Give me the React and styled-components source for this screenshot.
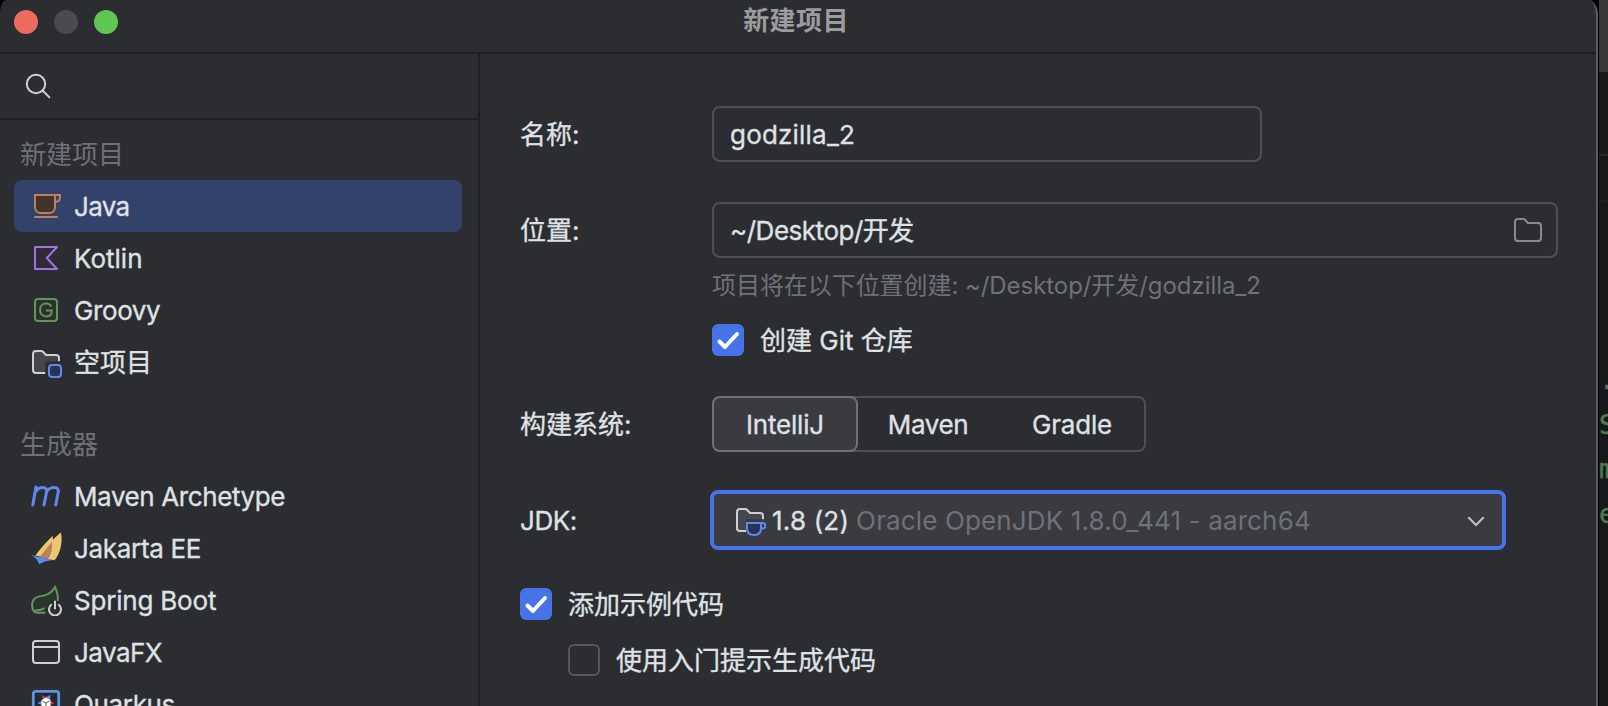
import React from 'react';
import styled, { createGlobalStyle } from 'styled-components';

const Global = createGlobalStyle`
  * { box-sizing: border-box; }
  body { margin: 0; background: #161719; overflow: hidden; }
`;

const Screen = styled.div`
  display: flex;
  width: 1608px;
  height: 706px;
  overflow: hidden;
  background: #000;
  font-family: Inter, "Noto Sans CJK SC", sans-serif;
  font-size: 26px;
  font-weight: 400;
  line-height: 31px;
  color: #dfe1e5;
  white-space: nowrap;
`;

const Window = styled.div`
  display: flex;
  flex-direction: column;
  flex: none;
  width: 1598px;
  height: 726px;
  background: #2b2d30;
  border-right: 2px solid #5a5c5f;
  border-top-left-radius: 7px 12px;
  border-top-right-radius: 10px 15px;
`;

const TitleBar = styled.header`
  display: grid;
  grid-template-columns: 1fr auto 1fr;
  flex: none;
  height: 54px;
  padding: 0 18px 0 14px;
  align-items: start;
  border-bottom: 2px solid #1e1f22;
`;

const Lights = styled.div`
  display: flex;
  gap: 16px;
  padding-top: 10px;
`;

const Light = styled.span`
  width: 24px;
  height: 24px;
  border-radius: 50%;
  background: ${(p) => p.$color};
`;

const Title = styled.h1`
  margin: 0;
  padding-top: 5px;
  font-size: 26px;
  font-weight: 700;
  letter-spacing: 0.4px;
  color: #9b9c9e;
`;

const Body = styled.div`
  display: flex;
  flex: 1;
  min-height: 0;
`;

const Sidebar = styled.aside`
  width: 480px;
  flex: none;
  border-right: 2px solid #1e1f22;
  overflow: hidden;
`;

const SearchBar = styled.div`
  display: flex;
  height: 66px;
  padding-left: 22px;
  align-items: center;
  border-bottom: 2px solid #1e1f22;
`;

const Group = styled.section`
  padding: ${(p) => (p.$first ? '8px' : '30px')} 16px 0 14px;
`;

const GroupTitle = styled.h2`
  margin: 0;
  padding: 11px 0 10px 6px;
  font-size: 26px;
  font-weight: 400;
  color: #6f7177;
`;

const Item = styled.div`
  display: flex;
  align-items: center;
  gap: 12px;
  height: 52px;
  padding-left: 16px;
  border-radius: 8px;
  background: ${(p) => (p.$selected ? '#33426a' : 'transparent')};
`;

const Text = styled.span`
  padding-top: 1px;
  letter-spacing: ${(p) => p.$track || 0}px;
  -webkit-text-stroke: 0.35px currentColor;
`;

const Icon = styled.svg`
  flex: none;
  display: block;
  width: 32px;
  height: 32px;
  fill: none;
`;

const Form = styled.main`
  display: flex;
  flex-direction: column;
  flex: 1;
  padding: 52px 38px 0 40px;
`;

const Row = styled.div`
  display: flex;
  align-items: center;
  height: 56px;
  margin-bottom: ${(p) => p.$gap || 0}px;
`;

const Label = styled(Text).attrs({ as: 'label' })`
  width: 192px;
  flex: none;
`;

const Field = styled.div`
  display: flex;
  align-items: center;
  justify-content: space-between;
  width: ${(p) => p.$width}px;
  height: 56px;
  padding: 0 12px 0 16px;
  border: 2px solid #4e5054;
  border-radius: 8px;
`;

const Hint = styled.p`
  margin: 13px 0 24px 192px;
  font-size: 24px;
  line-height: 29px;
  letter-spacing: -0.06px;
  color: #6f7177;
`;

const CheckRow = styled.div`
  display: flex;
  align-items: center;
  gap: 16px;
  height: 32px;
  margin: 0 0 ${(p) => p.$gap || 0}px ${(p) => p.$indent || 0}px;
`;

const Box = styled.span`
  display: flex;
  width: 32px;
  height: 32px;
  border-radius: 6px;
  border: ${(p) => (p.$checked ? 'none' : '2px solid #55575b')};
  background: ${(p) => (p.$checked ? '#4673e8' : 'transparent')};
`;

const Segments = styled.div`
  display: flex;
  width: 434px;
  height: 56px;
  border-radius: 8px;
  box-shadow: inset 0 0 0 2px #4e5054;
`;

const Segment = styled.span`
  display: flex;
  align-items: center;
  justify-content: center;
  width: ${(p) => p.$width}px;
  border-radius: 8px;
  border: 2px solid ${(p) => (p.$selected ? '#6f7178' : 'transparent')};
  background: ${(p) => (p.$selected ? '#3a3b40' : 'transparent')};
`;

const Combo = styled.div`
  display: flex;
  align-items: center;
  flex: none;
  width: 796px;
  height: 60px;
  margin-left: -2px;
  padding: 0 10px 0 20px;
  border: 4px solid #4673e8;
  border-radius: 8px;
  background: #3a3b40;
`;

const ComboValue = styled(Text)`
  margin: 0 7px 0 6px;
`;

const ComboDetail = styled(Text)`
  flex: 1;
  color: #6f7177;
  -webkit-text-stroke: 0;
`;

const Backdrop = styled.div`
  display: flex;
  flex-direction: column;
  flex: 1;
  margin-left: 1px;
  overflow: hidden;
  background: #17181a;
  font-family: "DejaVu Sans Mono", monospace;
  font-size: 27px;
  line-height: 44.5px;
  color: #507a50;
`;

const BackdropBar = styled.div`
  flex: none;
  height: ${(p) => p.$height}px;
  background: ${(p) => p.$fill};
  border-bottom: ${(p) => (p.$line ? `2px solid ${p.$line}` : 'none')};
`;

const Code = styled.div`
  padding-top: 156px;
  -webkit-text-stroke: 0.4px currentColor;
`;

const folder = 'M1.5 4C1.5 3.17 2.17 2.5 3 2.5H5.6C5.95 2.5 6.25 2.63 6.5 2.87L8 4.5H13C13.83 4.5 14.5 5.17 14.5 6V12C14.5 12.83 13.83 13.5 13 13.5H3C2.17 13.5 1.5 12.83 1.5 12Z';

const SearchIcon = () => (
  <Icon viewBox="0 0 16 16" stroke="#ced0d6">
    <circle cx="7" cy="7" r="4.6" />
    <path d="M10.4 10.4L13.7 13.7" strokeLinecap="round" />
  </Icon>
);

const JavaIcon = () => (
  <Icon viewBox="0 0 16 16" stroke="#be805b">
    <path d="M2.5 2.5H12.5V8.5C12.5 10.5 11 11.5 9.5 11.5H5.5C4 11.5 2.5 10.5 2.5 8.5Z" fill="#42332c" strokeLinejoin="round" />
    <path d="M12.5 2.5H15V3.8C15 5.3 14 6 12.6 6" strokeLinejoin="round" />
    <path d="M2.5 13.5H13.5" strokeLinecap="round" />
  </Icon>
);

const KotlinIcon = () => (
  <Icon viewBox="0 0 16 16">
    <path d="M2.5 2.5H13.5L8.4 8L13.5 13.5H2.5Z" fill="#302936" stroke="#9e74e0" strokeLinejoin="round" />
  </Icon>
);

const GroovyIcon = () => (
  <Icon viewBox="0 0 16 16" stroke="#649460">
    <rect x="2.5" y="2.5" width="11" height="11" rx="1.5" fill="#283428" />
    <path d="M10.6 6.2C10.1 5.3 9.2 4.8 8.1 4.8C6.3 4.8 5 6.1 5 8C5 9.9 6.3 11.2 8.1 11.2C9.8 11.2 10.9 10.1 10.9 8.2H8" />
  </Icon>
);

const EmptyIcon = () => (
  <Icon viewBox="0 0 16 16">
    <path d={folder} fill="#45474b" stroke="#ced0d6" />
    <rect x="7.6" y="7.6" width="9" height="9" rx="2" fill="#2b2d30" />
    <rect x="9.5" y="9.5" width="6" height="6" rx="1.5" fill="#293252" stroke="#5f89f0" />
  </Icon>
);

const MavenIcon = () => (
  <Icon viewBox="0 0 32 32" stroke="#5f89f0" strokeWidth="3" strokeLinecap="round" strokeLinejoin="round">
    <path d="M6 7L2.8 25M5.4 12C7.3 8.8 9.8 7.4 12.6 7.4C15.9 7.4 17.1 9.4 16.5 12.3L14 25M16.8 11.3C18.7 8.7 21 7.4 23.9 7.4C27.4 7.4 28.8 9.4 28.2 12.3L25.7 25" />
  </Icon>
);

const JakartaIcon = () => (
  <Icon viewBox="0 0 32 32">
    <path d="M5.5 23.5C9 18 18 8 22.7 4L23.4 14L16.5 26Z" fill="#edc671" />
    <path d="M9.5 25C14 20 18.5 13.5 22.3 9.5C23 14 21.5 21 17.5 27Z" fill="#be805b" />
    <path d="M17.5 27.2C21 22 22.8 15.5 22.5 8.5C25 5.5 28 2.5 31 .5C32.8 10 30.5 21.5 24.5 28.3Z" fill="#edc671" />
    <path d="M.5 22.7L7 24.4L22.8 28L15 29.5L9 32C7.5 27.5 5 25 .5 22.7Z" fill="#5f89f0" />
  </Icon>
);

const SpringIcon = () => (
  <Icon viewBox="0 0 32 32">
    <path d="M4.5 28C1.5 24.5 1.5 18.5 4.5 15C8.5 10.5 18.5 13.5 25 3C28.5 9.5 28.5 17 26.8 23L14 29H8.5C6.8 29 5.5 28.6 4.5 28Z" fill="#29362a" />
    <path d="M15.5 28.7H7C1.2 28.2 .8 18.5 4.5 14.7C8.5 10.4 19.2 14.3 25 3C27.3 8 28.2 12.5 27.8 17" stroke="#649460" strokeWidth="2" />
    <path d="M5 26.2C8.5 26.8 11.5 26 14.5 24.2" stroke="#649460" strokeWidth="2" />
    <circle cx="25" cy="25.3" r="8.6" fill="#2b2d30" />
    <path d="M21.2 20.8A6 6 0 1 0 28.8 20.8M25 17.5V24.5" stroke="#ced0d6" strokeWidth="2" strokeLinecap="round" />
  </Icon>
);

const JavaFxIcon = () => (
  <Icon viewBox="0 0 16 16" stroke="#ced0d6">
    <rect x="1.5" y="2.5" width="13" height="11" rx="1.5" />
    <path d="M2 5.5H14" />
  </Icon>
);

const QuarkusIcon = () => (
  <Icon viewBox="0 0 32 32">
    <rect x="3.3" y="3.3" width="25.4" height="25.4" rx="2.5" fill="#23272f" stroke="#5d93df" strokeWidth="2.8" />
    <path d="M11.5 7L16 9L14 13Z M24.5 15L19.5 12.5V17.5Z" fill="#e0324b" />
    <path d="M20.5 7L16 9L20 13Z M7.5 15L12.5 17.5V12.5Z" fill="#5d93df" />
    <path d="M16 9.5L20.5 12V18.5L16 22L11.5 18.5V12Z" fill="#fff" />
    <path d="M12.5 13L16 15L19.5 13M16 15V21" stroke="#555" strokeWidth="1" />
  </Icon>
);

const FolderIcon = () => (
  <Icon viewBox="0 0 16 16"><path d={folder} stroke="#888a91" /></Icon>
);

const JdkIcon = () => (
  <Icon viewBox="0 0 16 16">
    <path d={folder} fill="#45474b" stroke="#ced0d6" />
    <path d="M6 7.6H16V17H6Z" fill="#3a3b40" />
    <path d="M6.5 9.5H13.5V12C13.5 14.6 12 15.5 10 15.5S6.5 14.6 6.5 12Z" fill="#293252" stroke="#5f89f0" strokeLinejoin="round" />
    <path d="M13.5 9.5H14.5C16 9.5 16 12.2 14.5 12.2H13.4" stroke="#5f89f0" />
  </Icon>
);

const ChevronIcon = () => (
  <Icon viewBox="0 0 16 16">
    <path d="M4.4 6.9L8 10.5L11.6 6.9" stroke="#c0c2c8" strokeLinecap="round" />
  </Icon>
);

const Check = ({ checked }) => (
  <Box $checked={checked}>
    {checked && (
      <Icon viewBox="0 0 32 32">
        <path d="M7.5 17.5L13 23L25 10" stroke="#fff" strokeWidth="4" strokeLinecap="round" strokeLinejoin="round" />
      </Icon>
    )}
  </Box>
);

const projects = [
  ['Java', JavaIcon, -0.7],
  ['Kotlin', KotlinIcon, 0],
  ['Groovy', GroovyIcon, -0.4],
  ['空项目', EmptyIcon, 0],
];

const generators = [
  ['Maven Archetype', MavenIcon, -0.4],
  ['Jakarta EE', JakartaIcon, -0.32],
  ['Spring Boot', SpringIcon, -0.2],
  ['JavaFX', JavaFxIcon, -0.55],
  ['Quarkus', QuarkusIcon, -0.35],
];

const ItemGroup = ({ title, items, first, selected }) => (
  <Group $first={first}>
    <GroupTitle>{title}</GroupTitle>
    {items.map(([name, Glyph, track]) => (
      <Item key={name} $selected={name === selected}>
        <Glyph />
        <Text $track={track}>{name}</Text>
      </Item>
    ))}
  </Group>
);

export default function App() {
  return (
    <Screen>
      <Global />
      <Window>
        <TitleBar>
          <Lights>
            <Light $color="#ec6a5e" />
            <Light $color="#4a4b4d" />
            <Light $color="#61c554" />
          </Lights>
          <Title>新建项目</Title>
        </TitleBar>
        <Body>
          <Sidebar>
            <SearchBar><SearchIcon /></SearchBar>
            <ItemGroup title="新建项目" items={projects} first selected="Java" />
            <ItemGroup title="生成器" items={generators} />
          </Sidebar>
          <Form>
            <Row $gap={40}>
              <Label>名称:</Label>
              <Field $width={550}><Text $track={0.2}>godzilla_2</Text></Field>
            </Row>
            <Row>
              <Label>位置:</Label>
              <Field $width={846}>
                <Text $track={-0.48}>~/Desktop/开发</Text>
                <FolderIcon />
              </Field>
            </Row>
            <Hint>项目将在以下位置创建: ~/Desktop/开发/godzilla_2</Hint>
            <CheckRow $indent={192} $gap={40}>
              <Check checked />
              <Text>创建 Git 仓库</Text>
            </CheckRow>
            <Row $gap={40}>
              <Label>构建系统:</Label>
              <Segments>
                <Segment $width={146} $selected><Text $track={-0.2}>IntelliJ</Text></Segment>
                <Segment $width={140}><Text $track={-0.4}>Maven</Text></Segment>
                <Segment $width={148}><Text $track={-0.2}>Gradle</Text></Segment>
              </Segments>
            </Row>
            <Row $gap={40}>
              <Label $track={-0.4}>JDK:</Label>
              <Combo>
                <JdkIcon />
                <ComboValue $track={0.2}>1.8 (2)</ComboValue>
                <ComboDetail $track={0.14}>Oracle OpenJDK 1.8.0_441 - aarch64</ComboDetail>
                <ChevronIcon />
              </Combo>
            </Row>
            <CheckRow $gap={24}>
              <Check checked />
              <Text>添加示例代码</Text>
            </CheckRow>
            <CheckRow $indent={48}>
              <Check />
              <Text>使用入门提示生成代码</Text>
            </CheckRow>
          </Form>
        </Body>
      </Window>
      <Backdrop>
        <BackdropBar $height={72} $fill="#38393b" />
        <BackdropBar $height={84} $fill="#17181a" $line="#2a2b2d" />
        <BackdropBar $height={46} $fill="#17181a" $line="#1f2022" />
        <Code>
          <div>.</div>
          <div>S</div>
          <div>m</div>
          <div>e</div>
        </Code>
      </Backdrop>
    </Screen>
  );
}
